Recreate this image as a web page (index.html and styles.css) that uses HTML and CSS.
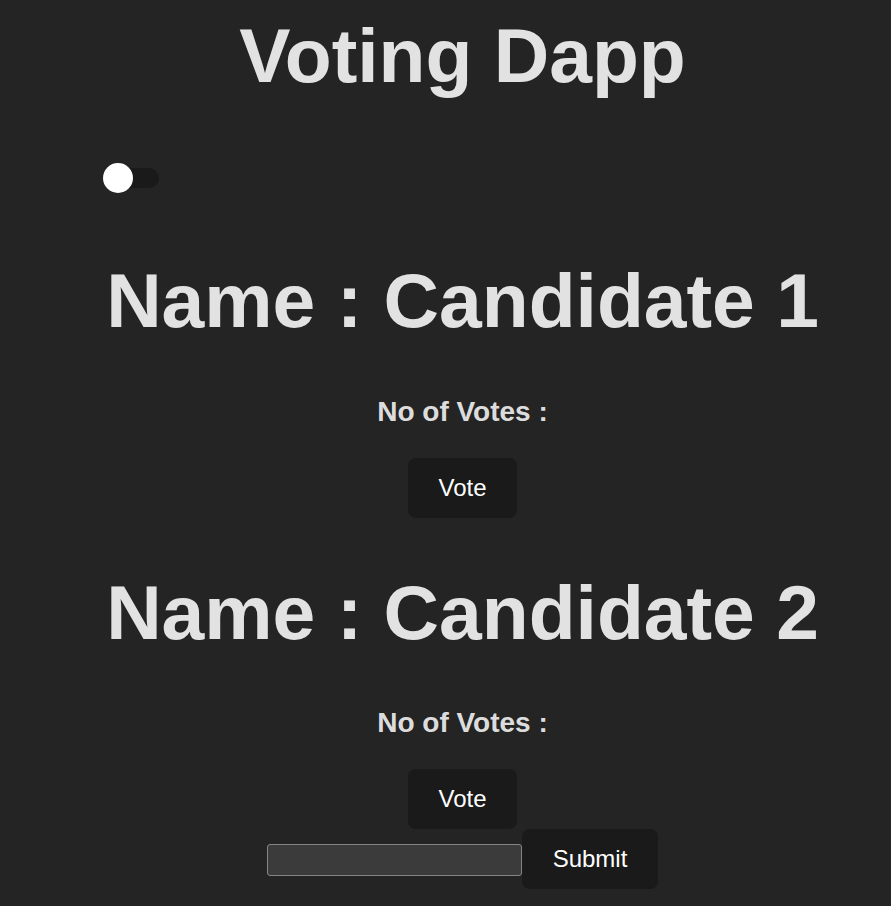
FILE: index.html
```html
<!DOCTYPE html>
<html lang="en">
<head>
<meta charset="UTF-8">
<title>Voting Dapp</title>
<link rel="stylesheet" href="styles.css">
</head>
<body>
<div class="app">
  <h1 class="title">Voting Dapp</h1>
  <div class="toggle-row">
    <label class="switch">
      <span class="track"></span>
      <span class="knob"></span>
    </label>
  </div>
  <div class="candidate">
    <h1 class="name">Name : Candidate 1</h1>
    <h3 class="votes">No of Votes : </h3>
    <button class="btn">Vote</button>
  </div>
  <div class="candidate">
    <h1 class="name">Name : Candidate 2</h1>
    <h3 class="votes">No of Votes : </h3>
    <button class="btn">Vote</button>
  </div>
  <div class="add-row">
    <input class="field" type="text">
    <button class="btn submit">Submit</button>
  </div>
</div>
</body>
</html>
```

FILE: styles.css
```css
html, body {
  margin: 0;
  padding: 0;
}
body {
  background: #242424;
  color: rgba(255, 255, 255, 0.87);
  font-family: "Liberation Sans", Arial, sans-serif;
  font-size: 24px;
  line-height: 1.5;
  min-height: 906px;
}
.app {
  padding-left: 34px;
  text-align: center;
}
.title {
  font-size: 76.8px;
  line-height: 1.1;
  font-weight: 700;
  margin: 13px 0 0;
}
.toggle-row {
  text-align: left;
  padding-left: 69px;
  margin-top: 66px;
}
.switch {
  position: relative;
  display: flex;
  align-items: center;
  width: 56px;
  height: 30px;
}
.track {
  display: block;
  width: 56px;
  height: 20px;
  border-radius: 10px;
  background: #1a1a1a;
}
.knob {
  position: absolute;
  left: 0;
  top: 0;
  width: 30px;
  height: 30px;
  border-radius: 50%;
  background: #ffffff;
}
.candidate {
  display: flex;
  flex-direction: column;
  align-items: center;
  margin-top: 65px;
}
.candidate + .candidate {
  margin-top: 52px;
}
.name {
  font-size: 76.8px;
  line-height: 1.1;
  font-weight: 700;
  margin: 0;
}
.votes {
  font-size: 28px;
  line-height: 42px;
  font-weight: 700;
  margin: 48px 0 0;
}
.btn {
  font-family: "Liberation Sans", Arial, sans-serif;
  font-size: 24px;
  font-weight: 500;
  line-height: 28px;
  color: #ffffff;
  background: #1a1a1a;
  border: 1px solid transparent;
  border-radius: 8px;
  padding: 15px 28.8px;
  height: 60px;
  cursor: pointer;
}
.candidate .btn {
  margin-top: 25px;
  width: 109px;
}
.add-row {
  display: flex;
  justify-content: center;
  align-items: center;
}
.field {
  width: 255px;
  height: 32px;
  box-sizing: border-box;
  background: #3b3b3b;
  border: 1px solid #858585;
  border-radius: 3px;
  color: #fff;
  margin: 2px 0 0;
}
.submit {
  width: 136px;
}
```
